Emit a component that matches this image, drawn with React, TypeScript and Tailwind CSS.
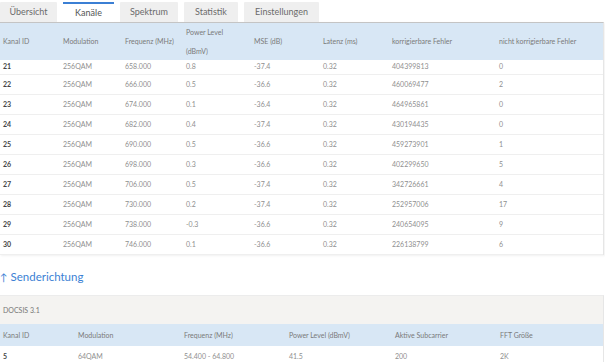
import React from "react";

const rows = [
  ["21", "256QAM", "658.000", "0.8", "-37.4", "0.32", "404399813", "0"],
  ["22", "256QAM", "666.000", "0.5", "-36.6", "0.32", "460069477", "2"],
  ["23", "256QAM", "674.000", "0.1", "-36.4", "0.32", "464965861", "0"],
  ["24", "256QAM", "682.000", "0.4", "-37.4", "0.32", "430194435", "0"],
  ["25", "256QAM", "690.000", "0.5", "-36.6", "0.32", "459273901", "1"],
  ["26", "256QAM", "698.000", "0.3", "-36.6", "0.32", "402299650", "5"],
  ["27", "256QAM", "706.000", "0.5", "-37.4", "0.32", "342726661", "4"],
  ["28", "256QAM", "730.000", "0.2", "-37.4", "0.32", "252957006", "17"],
  ["29", "256QAM", "738.000", "-0.3", "-36.6", "0.32", "240654095", "9"],
  ["30", "256QAM", "746.000", "0.1", "-36.6", "0.32", "226138799", "6"],
];

const widths = [60, 62, 61, 68, 69, 69, 107, 107];
const widths2 = [75, 106, 105, 106, 105, 106];

const tabs = [
  { label: "Übersicht", w: 57 },
  { label: "Kanäle", w: 51, active: true },
  { label: "Spektrum", w: 58 },
  { label: "Statistik", w: 54 },
  { label: "Einstellungen", w: 75 },
];

export default function App() {
  return (
    <div
      className="w-[605px] h-[362px] bg-white overflow-hidden relative"
      style={{ fontFamily: "Lato, 'Open Sans', sans-serif" }}
    >
      {/* tabs */}
      <div className="flex gap-[6px] pt-[2px] h-[22px]">
        {tabs.map((t) => (
          <div
            key={t.label}
            className={
              t.active
                ? "h-[20px] bg-white border-t-2 border-[#3b7fd4] text-[#555] text-[9px] flex items-center justify-center"
                : "h-[20px] bg-[#efefef] text-[#6b6b6b] text-[9px] flex items-center justify-center rounded-t-[1px]"
            }
            style={{ width: t.w }}
          >
            {t.label}
          </div>
        ))}
      </div>

      {/* downstream table */}
      <div className="w-[604px] border-t border-[#c4c4c4] border-r border-r-[#e6e6e6] shadow-[1px_1px_2px_rgba(0,0,0,0.06)]">
        <div className="flex h-[37px] bg-[#d8e7f5] text-[7px] text-[#7a7a7a] items-center">
          {["Kanal ID", "Modulation", "Frequenz (MHz)", "", "MSE (dB)", "Latenz (ms)", "korrigierbare Fehler", "nicht korrigierbare Fehler"].map(
            (h, i) => (
              <div key={i} className="pl-[3px]" style={{ width: widths[i] }}>
                {i === 3 ? (
                  <div className="flex flex-col gap-[11px] leading-[8px]">
                    <span>Power Level</span>
                    <span>(dBmV)</span>
                  </div>
                ) : (
                  h
                )}
              </div>
            )
          )}
        </div>
        {rows.map((r, ri) => (
          <div
            key={ri}
            className={
              (ri === 0 ? "h-[15px] items-start pt-[1px] " : "h-[20px] items-center ") +
              "flex text-[7px] text-[#8f8f8f] border-b-[1.5px] border-[#efefef]"
            }
          >
            {r.map((c, ci) => (
              <div
                key={ci}
                className={ci === 0 ? "pl-[3px] font-bold text-[#444]" : "pl-[3px]"}
                style={{ width: widths[ci] }}
              >
                {c}
              </div>
            ))}
          </div>
        ))}
      </div>

      {/* upstream heading */}
      <div className="mt-[13px] h-[18px] flex items-center text-[11.5px] text-[#3b7fd4] leading-none">
        <span className="text-[10px] mr-[3px]">↑</span>
        <span>Senderichtung</span>
      </div>

      {/* upstream table */}
      <div className="mt-[9px] w-[604px] border-t border-[#ececec] border-r border-r-[#e6e6e6]">
        <div className="h-[28px] bg-[#f4f3f1] flex items-center pl-[3px] text-[7px] text-[#777]">
          DOCSIS 3.1
        </div>
        <div className="flex h-[22px] bg-[#d8e7f5] text-[7px] text-[#7a7a7a] items-center">
          {["Kanal ID", "Modulation", "Frequenz (MHz)", "Power Level (dBmV)", "Aktive Subcarrier", "FFT Größe"].map((h, i) => (
            <div key={i} className="pl-[3px]" style={{ width: widths2[i] }}>
              {h}
            </div>
          ))}
        </div>
        <div className="flex h-[20px] items-center text-[7px] text-[#8f8f8f]">
          {["5", "64QAM", "54.400 - 64.800", "41.5", "200", "2K"].map((c, ci) => (
            <div
              key={ci}
              className={ci === 0 ? "pl-[3px] font-bold text-[#444]" : "pl-[3px]"}
              style={{ width: widths2[ci] }}
            >
              {c}
            </div>
          ))}
        </div>
      </div>
    </div>
  );
}
